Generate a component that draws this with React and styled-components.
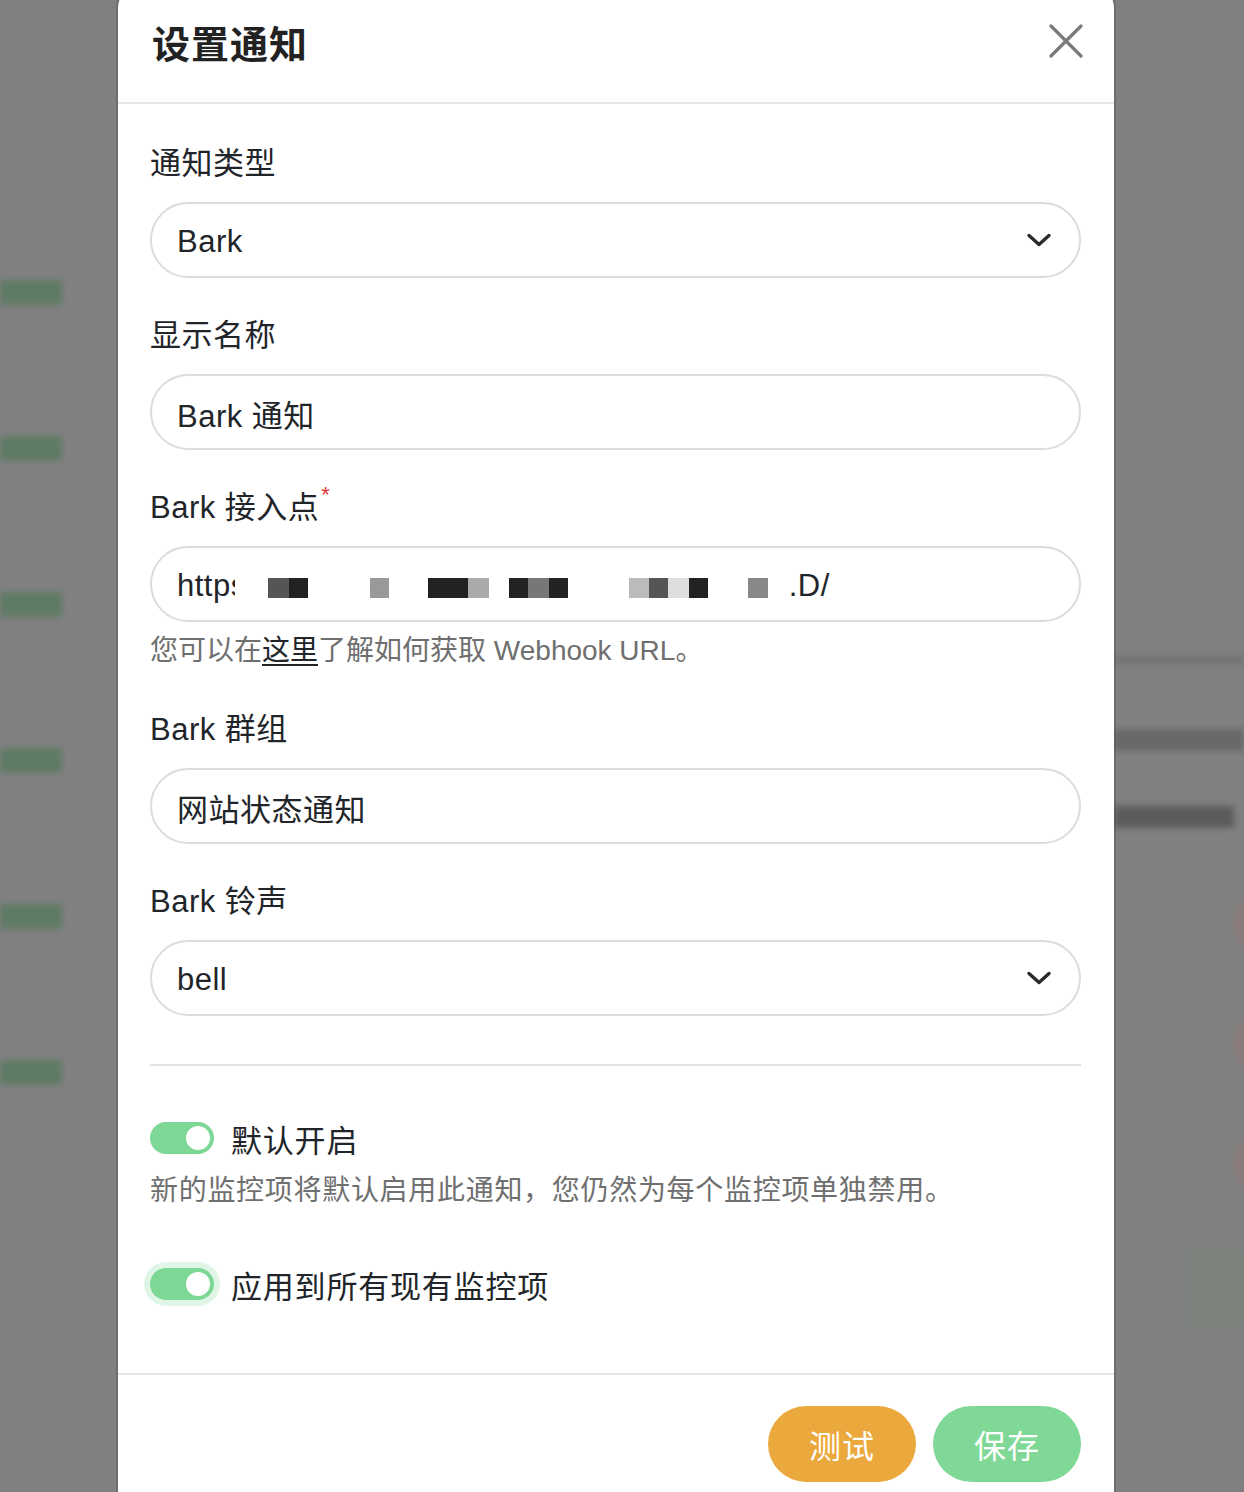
import styled, { createGlobalStyle } from "styled-components";

const GlobalStyle = createGlobalStyle`
  * { box-sizing: border-box; }
  html, body { margin: 0; padding: 0; }
  body {
    background: #7f7f80;
    font-family: "Liberation Sans", "Noto Sans CJK SC", sans-serif;
    overflow: hidden;
  }
`;

const MOSAIC = [
  [21, null], [21, "#555"], [19, "#222"], [62, null], [19, "#999"], [39, null],
  [40, "#222"], [21, "#aaa"], [20, null], [19, "#222"], [21, "#777"], [19, "#222"],
  [61, null], [20, "#bbb"], [19, "#555"], [21, "#ddd"], [19, "#222"], [40, null],
  [20, "#888"], [21, null],
];

const Chevron = () => (
  <svg width="26" height="16" viewBox="0 0 26 16" fill="none">
    <path d="M3 3.5 13 12.5 23 3.5" stroke="#2b2b2b" strokeWidth="3.4" strokeLinecap="round" strokeLinejoin="round" />
  </svg>
);

const CloseIcon = () => (
  <svg width="34" height="34" viewBox="0 0 34 34" fill="none">
    <path d="M2 2 32 32 M32 2 2 32" stroke="#7a7a7a" strokeWidth="3.2" strokeLinecap="round" />
  </svg>
);

const Field = ({ label, required, value, select, help, children }) => (
  <StyledField>
    <Label>
      {label}
      {required && <Star>*</Star>}
    </Label>
    <Pill>
      <Value>{children || value}</Value>
      {select && <Chevron />}
    </Pill>
    {help && <Help>{help}</Help>}
  </StyledField>
);

const Toggle = ({ label, focused }) => (
  <ToggleRow>
    <Switch $focused={focused}>
      <Knob />
    </Switch>
    <ToggleLabel>{label}</ToggleLabel>
  </ToggleRow>
);

const App = () => {
  return (
    <>
      <GlobalStyle />
      <Screen>
        <BackPage>
          <LeftColumn>
            {[0, 1, 2, 3, 4, 5].map((i) => (
              <GreenBar key={i} />
            ))}
          </LeftColumn>
          <div />
          <RightColumn>
            <BackRule />
            <BackText $width={130} />
            <BackText $width={120} $dark />
            <RedDot />
            <RedDot />
            <RedDot />
            <GreenPatch />
          </RightColumn>
        </BackPage>

        <Overlay>
          <Modal>
            <Header>
              <Title>设置通知</Title>
              <CloseButton>
                <CloseIcon />
              </CloseButton>
            </Header>

            <Body>
              <Field label="通知类型" value="Bark" select />
              <Field label="显示名称" value="Bark 通知" />
              <Field
                label="Bark 接入点"
                required
                help={
                  <>
                    您可以在<HelpLink>这里</HelpLink>了解如何获取 Webhook URL。
                  </>
                }
              >
                https
                <Mosaic>
                  {MOSAIC.map(([w, c], i) => (
                    <Tile key={i} style={{ width: w, background: c || "transparent" }} />
                  ))}
                </Mosaic>
                .D/
              </Field>
              <Field label="Bark 群组" value="网站状态通知" />
              <Field label="Bark 铃声" value="bell" select />

              <Divider />

              <Toggle label="默认开启" />
              <ToggleHelp>新的监控项将默认启用此通知，您仍然为每个监控项单独禁用。</ToggleHelp>
              <Toggle label="应用到所有现有监控项" focused />
            </Body>

            <Footer>
              <Button $color="#eba83c">测试</Button>
              <Button $color="#7fd896">保存</Button>
            </Footer>
          </Modal>
        </Overlay>
      </Screen>
    </>
  );
};

const Screen = styled.div`
  display: grid;
  width: 1244px;
  height: 1492px;
  overflow: hidden;
  > * {
    grid-area: 1 / 1;
  }
`;

const BackPage = styled.div`
  display: grid;
  grid-template-columns: 62px 1fr 130px;
  background: #808080;
  filter: blur(3px);
`;

const LeftColumn = styled.div`
  display: flex;
  flex-direction: column;
  gap: 131px;
  padding-top: 280px;
`;

const GreenBar = styled.div`
  height: 25px;
  background: #5f7b64;
`;

const RightColumn = styled.div`
  display: flex;
  flex-direction: column;
  align-items: flex-start;
  padding-top: 656px;
`;

const BackRule = styled.div`
  width: 100%;
  height: 8px;
  background: #727272;
`;

const BackText = styled.div`
  width: ${(p) => p.$width}px;
  height: 22px;
  margin-top: ${(p) => (p.$dark ? 55 : 65)}px;
  background: ${(p) => (p.$dark ? "#5c5c5c" : "#686868")};
`;

const RedDot = styled.div`
  width: 40px;
  height: 50px;
  border-radius: 50%;
  margin: 70px 0 0 118px;
  background: #8a7c7c;
`;

const GreenPatch = styled.div`
  width: 60px;
  height: 80px;
  margin: 60px 0 0 75px;
  background: #7c837d;
`;

const Overlay = styled.div`
  position: relative;
  z-index: 1;
  display: flex;
  align-items: flex-start;
  padding-left: 118px;
`;

const Modal = styled.div`
  width: 996px;
  margin-top: -16px;
  background: #fff;
  border-radius: 24px;
  box-shadow: 0 0 0 2px rgba(0, 0, 0, 0.14);
  color: #212529;
`;

const Header = styled.div`
  height: 120px;
  display: flex;
  align-items: center;
  justify-content: space-between;
  padding: 0 31px 4px 34px;
  border-bottom: 2px solid #e6e6e6;
`;

const Title = styled.h1`
  margin: 0;
  font-size: 38px;
  font-weight: 700;
  letter-spacing: 1px;
  color: #222;
`;

const CloseButton = styled.div`
  display: flex;
  width: 34px;
  height: 34px;
`;

const Body = styled.div`
  padding: 38px 33px 67px 32px;
`;

const StyledField = styled.div`
  margin-bottom: 36px;
`;

const Label = styled.div`
  font-size: 31px;
  line-height: 44px;
  letter-spacing: 0.5px;
  margin-bottom: 16px;
  color: #212529;
`;

const Star = styled.span`
  color: #e53935;
  font-size: 22px;
  line-height: 0;
  vertical-align: 16px;
  margin-left: 2px;
`;

const Pill = styled.div`
  height: 76px;
  border: 2px solid #dcdcdc;
  border-radius: 38px;
  display: flex;
  align-items: center;
  justify-content: space-between;
  padding: 0 27px 0 25px;
`;

const Value = styled.div`
  display: flex;
  align-items: center;
  padding-top: 3px;
  font-size: 31px;
  letter-spacing: 0.5px;
  color: #212529;
`;

const Mosaic = styled.span`
  display: inline-flex;
  height: 20px;
  margin-top: 5px;
  background: #fff;
  box-shadow: 0 0 0 12px #fff;
`;

const Tile = styled.span`
  display: block;
  height: 20px;
`;

const Help = styled.div`
  margin-top: 8px;
  font-size: 28px;
  line-height: 42px;
  color: #6f6f6f;
`;

const HelpLink = styled.span`
  color: #212529;
  text-decoration: underline;
  text-underline-offset: 4px;
`;

const Divider = styled.div`
  height: 2px;
  background: #e2e2e2;
  margin: 48px 0 50px;
`;

const ToggleRow = styled.div`
  display: flex;
  align-items: center;
  gap: 17px;
  height: 44px;
`;

const Switch = styled.div`
  width: 64px;
  height: 32px;
  border-radius: 16px;
  background: #7dd896;
  display: flex;
  align-items: center;
  justify-content: flex-end;
  padding-right: 4px;
  box-shadow: ${(p) => (p.$focused ? "0 0 0 6px #dff6e6" : "none")};
`;

const Knob = styled.div`
  width: 24px;
  height: 24px;
  border-radius: 50%;
  background: #fff;
`;

const ToggleLabel = styled.div`
  font-size: 31px;
  letter-spacing: 0.8px;
  color: #212529;
`;

const ToggleHelp = styled.div`
  margin: 10px 0 50px;
  font-size: 28px;
  line-height: 42px;
  letter-spacing: 0.7px;
  color: #6f6f6f;
`;

const Footer = styled.div`
  display: flex;
  justify-content: flex-end;
  gap: 17px;
  padding: 31px 33px 40px;
  border-top: 2px solid #e6e6e6;
`;

const Button = styled.div`
  width: 148px;
  height: 76px;
  border-radius: 38px;
  background: ${(p) => p.$color};
  color: #fff;
  font-size: 32px;
  display: flex;
  align-items: center;
  justify-content: center;
  letter-spacing: 1px;
`;

export default App;
